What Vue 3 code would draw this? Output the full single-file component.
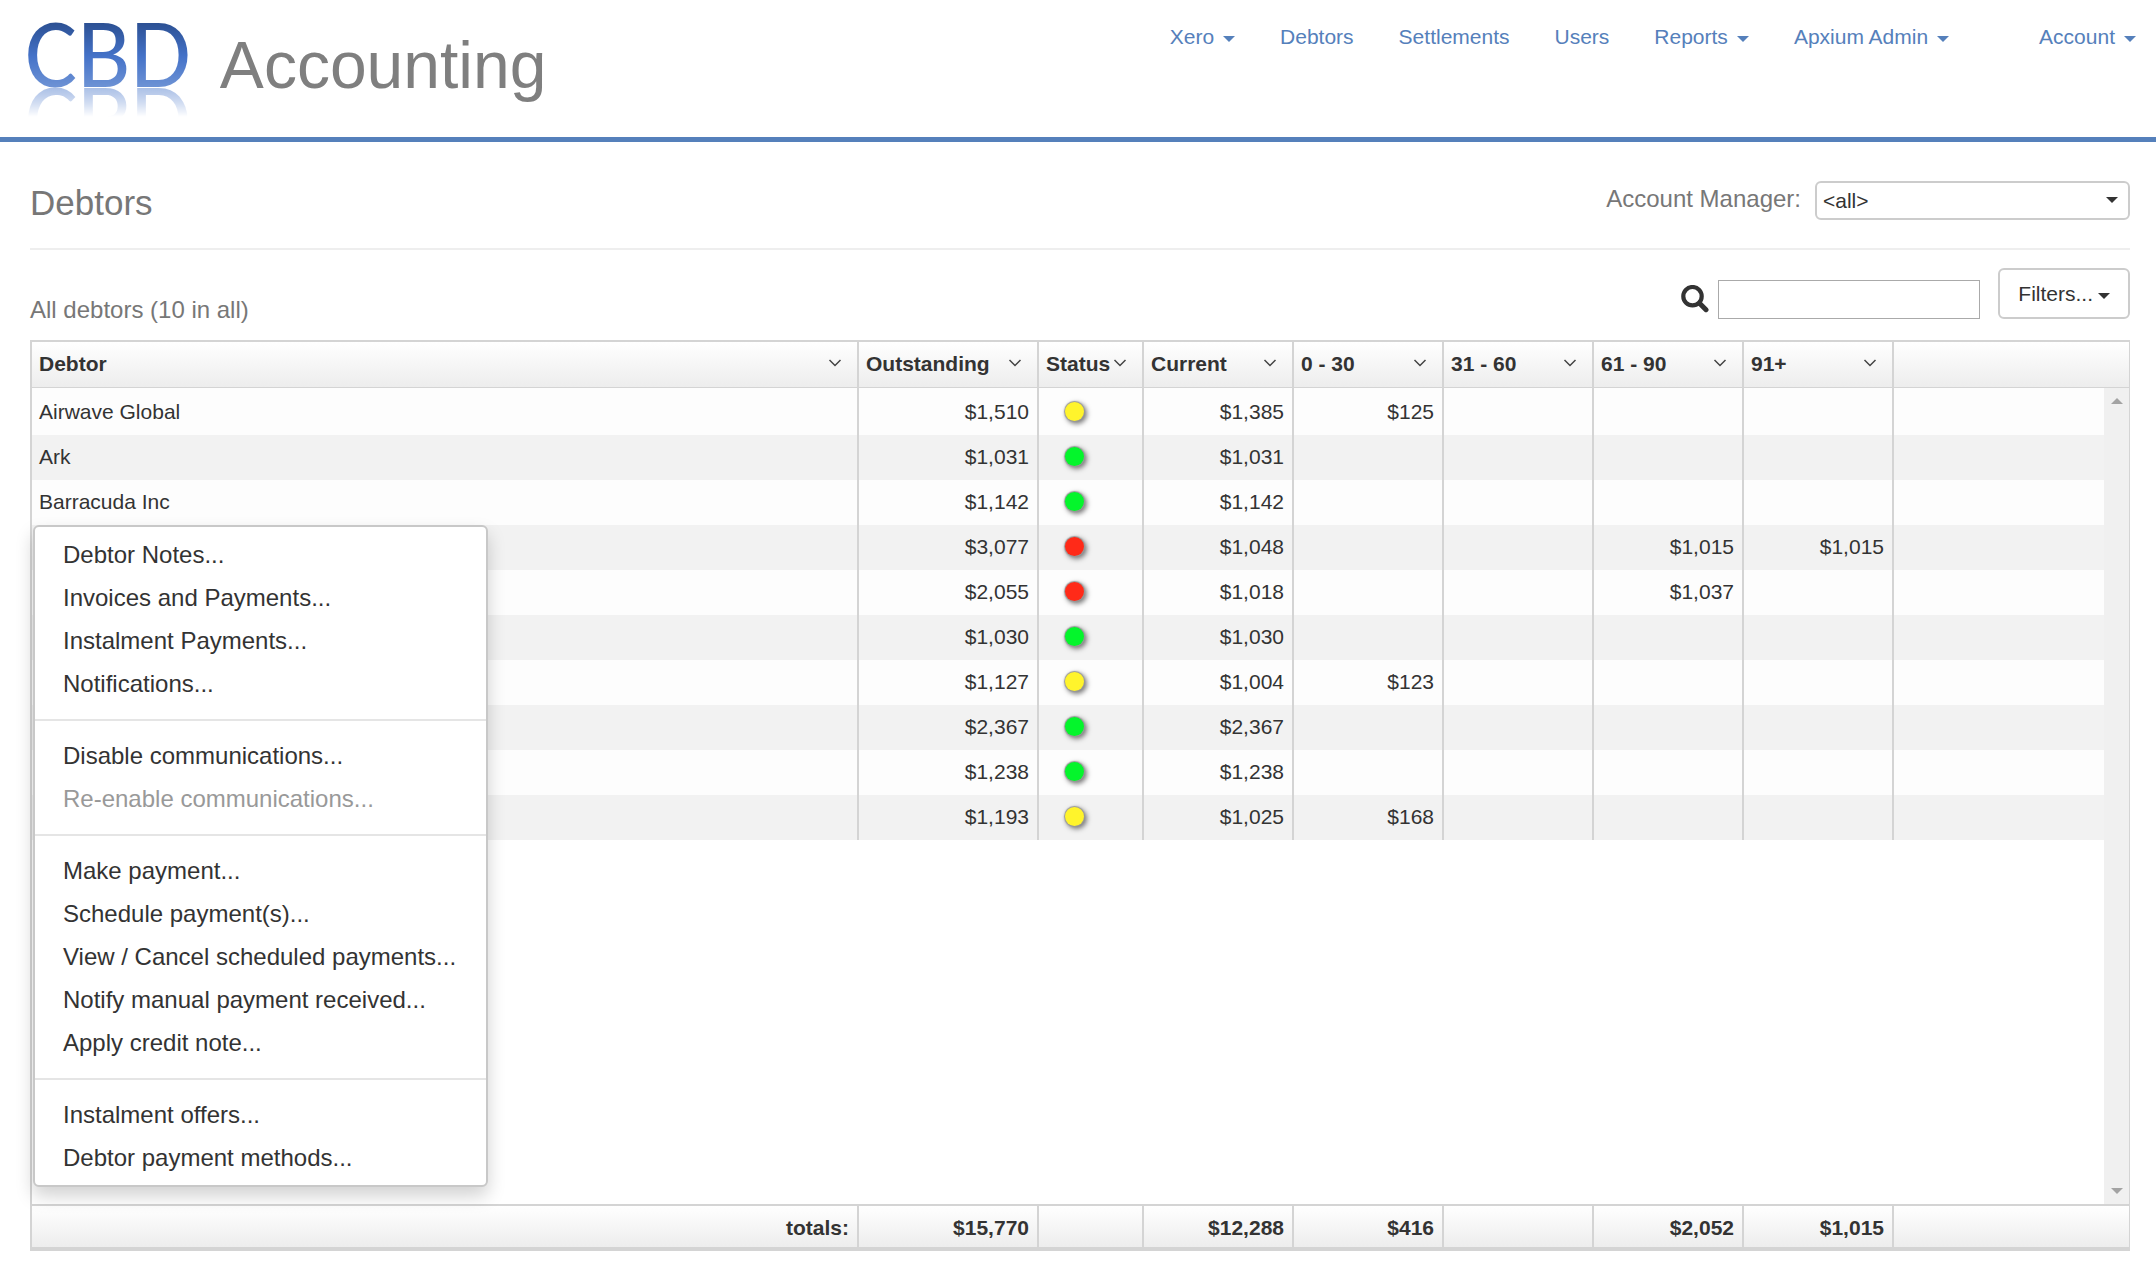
<script setup>
import { ref } from 'vue'

const nav = [
  { label: 'Xero', menu: true },
  { label: 'Debtors' },
  { label: 'Settlements' },
  { label: 'Users' },
  { label: 'Reports', menu: true },
  { label: 'Apxium Admin', menu: true },
  { label: 'Account', menu: true, last: true },
]

const columns = ['Debtor', 'Outstanding', 'Status', 'Current', '0 - 30', '31 - 60', '61 - 90', '91+']

const rows = [
  { name: 'Airwave Global', total: '$1,510', status: 'yellow', ages: ['$1,385', '$125', '', '', ''] },
  { name: 'Ark', total: '$1,031', status: 'green', ages: ['$1,031', '', '', '', ''] },
  { name: 'Barracuda Inc', total: '$1,142', status: 'green', ages: ['$1,142', '', '', '', ''] },
  { name: '', total: '$3,077', status: 'red', ages: ['$1,048', '', '', '$1,015', '$1,015'] },
  { name: '', total: '$2,055', status: 'red', ages: ['$1,018', '', '', '$1,037', ''] },
  { name: '', total: '$1,030', status: 'green', ages: ['$1,030', '', '', '', ''] },
  { name: '', total: '$1,127', status: 'yellow', ages: ['$1,004', '$123', '', '', ''] },
  { name: '', total: '$2,367', status: 'green', ages: ['$2,367', '', '', '', ''] },
  { name: '', total: '$1,238', status: 'green', ages: ['$1,238', '', '', '', ''] },
  { name: '', total: '$1,193', status: 'yellow', ages: ['$1,025', '$168', '', '', ''] },
]

const totals = ['totals:', '$15,770', '', '$12,288', '$416', '', '$2,052', '$1,015', '']

const menuGroups = [
  [
    { label: 'Debtor Notes...' },
    { label: 'Invoices and Payments...' },
    { label: 'Instalment Payments...' },
    { label: 'Notifications...' },
  ],
  [{ label: 'Disable communications...' }, { label: 'Re-enable communications...', disabled: true }],
  [
    { label: 'Make payment...' },
    { label: 'Schedule payment(s)...' },
    { label: 'View / Cancel scheduled payments...' },
    { label: 'Notify manual payment received...' },
    { label: 'Apply credit note...' },
  ],
  [{ label: 'Instalment offers...' }, { label: 'Debtor payment methods...' }],
]

const search = ref('')
</script>

<template>
  <div class="page">
    <header class="top">
      <a class="logo" href="#" aria-label="CBD Accounting">
        <span class="cbd">CBD</span>
        <span class="word">Accounting</span>
      </a>
      <nav class="nav">
        <a v-for="item in nav" :key="item.label" href="#" :class="{ last: item.last }">
          {{ item.label }}<span v-if="item.menu" class="caret"></span>
        </a>
      </nav>
    </header>

    <main class="content">
      <div class="title-bar">
        <h1>Debtors</h1>
        <div class="manager">
          <label for="manager">Account Manager:</label>
          <div class="select-wrap">
            <select id="manager">
              <option>&lt;all&gt;</option>
            </select>
            <span class="caret select-caret"></span>
          </div>
        </div>
      </div>

      <div class="tools">
        <h2>All debtors (10 in all)</h2>
        <div class="actions">
          <label class="search-icon" for="search" aria-label="Search">
            <svg width="28" height="28" viewBox="0 0 28 28">
              <circle cx="11.5" cy="11.2" r="9.2" fill="none" stroke="#333" stroke-width="4.2" />
              <path d="M18.5 18.2L25 24.7" stroke="#333" stroke-width="5" stroke-linecap="round" />
            </svg>
          </label>
          <input id="search" v-model="search" type="text" />
          <button class="filters" type="button">Filters...<span class="caret"></span></button>
        </div>
      </div>

      <div class="grid">
        <table>
          <colgroup>
            <col class="c-name" />
            <col class="c-total" />
            <col class="c-status" />
            <col v-for="n in 5" :key="n" class="c-age" />
            <col />
          </colgroup>
          <thead>
            <tr>
              <th v-for="c in columns" :key="c" scope="col">
                <div class="head">
                  {{ c }}
                  <svg width="14" height="8" viewBox="0 0 14 8">
                    <path d="M1.5 1L7 6.5L12.5 1" fill="none" stroke="#444" stroke-width="1.5" />
                  </svg>
                </div>
              </th>
              <th></th>
            </tr>
          </thead>
          <tbody>
            <tr v-for="(r, i) in rows" :key="i" class="row">
              <td class="name">{{ r.name }}</td>
              <td>{{ r.total }}</td>
              <td class="status"><span class="dot" :class="r.status"></span></td>
              <td v-for="(a, j) in r.ages" :key="j">{{ a }}</td>
              <td></td>
            </tr>
            <tr>
              <td colspan="9"></td>
            </tr>
          </tbody>
          <tfoot>
            <tr>
              <td v-for="(t, i) in totals" :key="i">{{ t }}</td>
            </tr>
          </tfoot>
        </table>

        <div class="scrollbar" aria-hidden="true">
          <span class="arrow up"></span>
          <span class="arrow down"></span>
        </div>

        <div class="menu">
          <ul v-for="(g, i) in menuGroups" :key="i">
            <li v-for="m in g" :key="m.label">
              <button type="button" :disabled="m.disabled">{{ m.label }}</button>
            </li>
          </ul>
        </div>
      </div>
    </main>
  </div>
</template>

<style>
body {
  background: #fff;
}
</style>

<style scoped>
* {
  box-sizing: border-box;
}
.page {
  min-height: 100vh;
  display: flex;
  flex-direction: column;
  font-family: 'Liberation Sans', Arial, sans-serif;
  font-size: 21px;
  line-height: 30px;
  color: #333;
}
button,
input,
select {
  font: inherit;
  color: inherit;
}
.top {
  display: flex;
  justify-content: space-between;
  align-items: flex-start;
  height: 142px;
  padding: 0 20px 0 25px;
  border-bottom: 5px solid #5580bb;
}
.logo {
  display: flex;
  align-items: flex-start;
  gap: 29px;
  text-decoration: none;
}
.cbd {
  font: 98px/108px Carlito, Calibri, 'Open Sans', sans-serif;
  background: linear-gradient(#2b4f91 20%, #4472c8 52%, #7296d6 84%);
  background-clip: text;
  color: transparent;
  -webkit-box-reflect: below -41px linear-gradient(transparent 54%, rgba(255, 255, 255, 0.6) 82%);
}
.word {
  padding-top: 28px;
  font-size: 66px;
  line-height: 74px;
  color: #7f7f7f;
}
.nav {
  display: flex;
  gap: 45px;
  padding-top: 22px;
}
.nav a {
  display: flex;
  align-items: center;
  gap: 9px;
  color: #5580bb;
  text-decoration: none;
  white-space: nowrap;
}
.nav .last {
  margin-left: 45px;
}
.caret {
  border: 6px solid transparent;
  border-top-color: currentColor;
  border-bottom: 0;
}
.nav .caret,
.filters .caret {
  margin-top: 4px;
}
.content {
  flex: 1;
  display: flex;
  flex-direction: column;
  padding: 0 26px 21px 30px;
}
.title-bar {
  display: flex;
  justify-content: space-between;
  align-items: flex-start;
  height: 108px;
  padding-top: 39px;
  border-bottom: 2px solid #eee;
}
h1 {
  margin: 0;
  font-weight: 400;
  font-size: 35px;
  line-height: 44px;
  color: #777;
}
.manager {
  display: flex;
  align-items: center;
  gap: 14px;
  font-size: 24px;
  color: #777;
}
.manager label {
  padding-bottom: 3px;
}
.select-wrap {
  position: relative;
  font-size: 21px;
  color: #333;
}
select {
  display: block;
  width: 315px;
  height: 39px;
  padding: 0 6px;
  appearance: none;
  background: #fff;
  border: 2px solid #ccc;
  border-radius: 6px;
}
.select-caret {
  position: absolute;
  right: 12px;
  top: 16px;
}
.tools {
  display: flex;
  justify-content: space-between;
  align-items: flex-end;
  height: 90px;
  padding-bottom: 21px;
}
h2 {
  margin: 0 0 -9px;
  font-weight: 400;
  font-size: 24px;
  line-height: 36px;
  color: #777;
}
.actions {
  display: flex;
  align-items: flex-end;
}
.search-icon {
  display: block;
  height: 34px;
  margin-right: 9px;
}
.search-icon svg {
  display: block;
}
input {
  width: 262px;
  height: 39px;
  padding: 0 6px;
  border: 1px solid #aaa;
  background: #fff;
}
.filters {
  display: flex;
  align-items: center;
  gap: 5px;
  height: 51px;
  margin-left: 18px;
  padding: 0 18px;
  background: #fff;
  border: 2px solid #ccc;
  border-radius: 6px;
}
.grid {
  flex: 1;
  display: flex;
  position: relative;
  border: 2px solid #d4d4d4;
  border-right-width: 1px;
  border-bottom-width: 4px;
}
table {
  flex: 1;
  width: 100%;
  table-layout: fixed;
  border-collapse: separate;
  border-spacing: 0;
}
.c-name {
  width: 827px;
}
.c-total {
  width: 180px;
}
.c-status {
  width: 105px;
}
.c-age {
  width: 150px;
}
th,
td {
  padding: 0 8px 2px 7px;
  border-right: 2px solid #d4d4d4;
  text-align: right;
  white-space: nowrap;
}
th:last-child,
td:last-child {
  border-right: 0;
}
thead tr {
  height: 46px;
}
th {
  padding-right: 15px;
  border-bottom: 1px solid #d4d4d4;
  background: linear-gradient(#fff, #ededed);
}
.head {
  display: flex;
  align-items: center;
  justify-content: space-between;
}
.head svg {
  flex: none;
  margin-bottom: 2px;
}
.row {
  height: 45px;
  background: #fdfdfd;
}
.row:first-child {
  height: 47px;
}
.row:first-child td {
  padding-top: 2px;
}
.row:nth-child(even) {
  background: #f2f2f2;
}
.row .name {
  text-align: left;
}
.status {
  padding-left: 26px;
}
.dot {
  display: block;
  width: 19px;
  height: 19px;
  border-radius: 50%;
  box-shadow: 0 0 1px 1px #999, 2px 2px 5px 1px #777;
}
.yellow {
  background: #fff42c;
}
.green {
  background: #04f52c;
}
.red {
  background: #ff2a18;
}
tfoot tr {
  height: 43px;
}
tfoot td {
  padding: 2px 8px 0;
  border-top: 2px solid #d4d4d4;
  background: linear-gradient(#fff, #ededed);
  font-weight: 700;
}
.scrollbar {
  position: absolute;
  top: 46px;
  right: 0;
  bottom: 43px;
  width: 25px;
  display: flex;
  flex-direction: column;
  justify-content: space-between;
  align-items: center;
  padding: 10px 0;
  background: #f0f0f0;
}
.arrow {
  border: 6px solid transparent;
}
.up {
  border-bottom-color: #a3a3a3;
  border-top: 0;
}
.down {
  border-top-color: #a3a3a3;
  border-bottom: 0;
}
.menu {
  position: absolute;
  left: 1px;
  top: 183px;
  padding: 6px 0;
  background: #fff;
  border: 2px solid #c8c8c8;
  border-radius: 6px;
  box-shadow: 0 9px 18px rgba(0, 0, 0, 0.18);
}
.menu ul {
  margin: 0;
  padding: 0;
  list-style: none;
}
.menu ul + ul {
  margin-top: 14px;
  padding-top: 13px;
  border-top: 2px solid #e5e5e5;
}
.menu button {
  display: block;
  width: 100%;
  padding: 0 30px 0 28px;
  border: 0;
  background: none;
  font-size: 24px;
  line-height: 43px;
  text-align: left;
  white-space: nowrap;
}
.menu button:disabled {
  color: #999;
}
</style>
